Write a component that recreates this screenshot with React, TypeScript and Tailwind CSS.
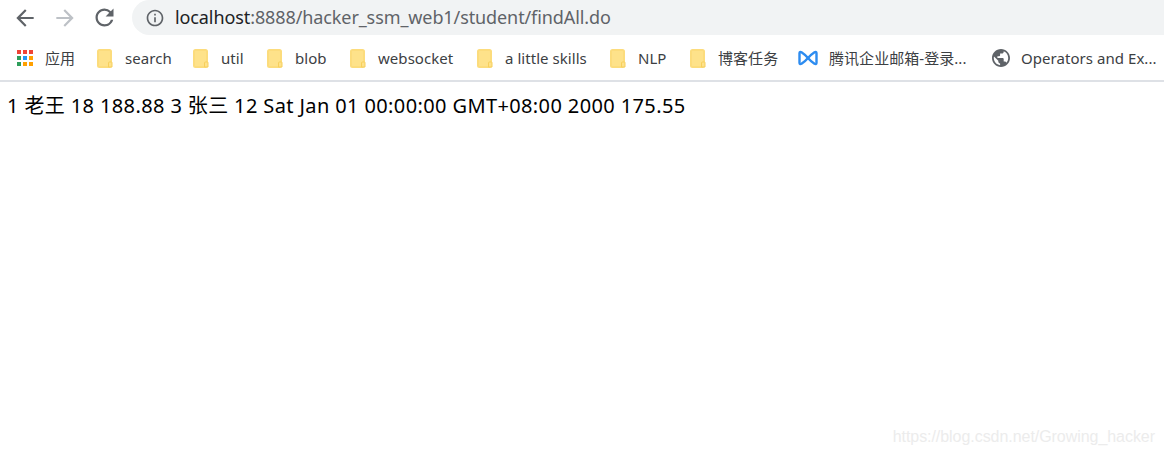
import React from 'react';

const FONT = "font-['Noto_Sans','Noto_Sans_CJK_SC',sans-serif]";

const NavIcon = ({ d, size, className }: { d: string; size: number; className: string }) => (
  <svg width={size} height={size} viewBox="0 0 24 24" fill="currentColor" className={`shrink-0 ${className}`}>
    <path d={d} />
  </svg>
);

const BACK = 'M20 11H7.83l5.59-5.59L12 4l-8 8 8 8 1.41-1.41L7.83 13H20v-2z';
const FORWARD = 'M4 11h12.17l-5.59-5.59L12 4l8 8-8 8-1.41-1.41L16.17 13H4v-2z';
const RELOAD =
  'M17.65 6.35A7.958 7.958 0 0 0 12 4c-4.42 0-7.99 3.58-7.99 8s3.57 8 7.99 8c3.73 0 6.84-2.55 7.73-6h-2.08A5.99 5.99 0 0 1 12 18c-3.31 0-6-2.69-6-6s2.69-6 6-6c1.66 0 3.14.69 4.22 1.78L13 11h7V4l-2.35 2.35z';
const INFO =
  'M11 7h2v2h-2zm0 4h2v6h-2zm1-9C6.48 2 2 6.48 2 12s4.48 10 10 10 10-4.48 10-10S17.52 2 12 2zm0 18c-4.41 0-8-3.59-8-8s3.59-8 8-8 8 3.59 8 8-3.59 8-8 8z';

const FolderIcon = () => (
  <svg width="16" height="19" viewBox="0 0 16 19" className="shrink-0">
    <rect x="1" y="1" width="13" height="17" rx="1.5" fill="#fee28a" stroke="#fcdc7c" strokeWidth="2" />
    <path d="M12.5 13h2a1 1 0 0 1 .5 1v4h-3.5v-4a1 1 0 0 1 1-1z" fill="#fee28a" stroke="#f7cf5c" />
  </svg>
);

const AppsIcon = () => {
  const colors = ['#ef4336', '#ef4336', '#ef4336', '#2e9e5b', '#2196f3', '#ffa000', '#2e9e5b', '#ffa000', '#ffa000'];
  return (
    <div className="grid grid-cols-3 gap-[2px] w-[16px] shrink-0">
      {colors.map((c, i) => (
        <div key={i} className="w-[4px] h-[4px]" style={{ backgroundColor: c }} />
      ))}
    </div>
  );
};

const MailIcon = () => (
  <svg width="20" height="16" viewBox="0 0 20 16" fill="none" stroke="#2d8cf0" strokeWidth="2.4" strokeLinejoin="round" className="shrink-0">
    <path d="M1.5 3.2 Q1.5 1.2 3.5 2.2 Q7 4.5 10 8 Q7 11.5 3.5 13.8 Q1.5 14.8 1.5 12.8 Z" />
    <path d="M18.5 3.2 Q18.5 1.2 16.5 2.2 Q13 4.5 10 8 Q13 11.5 16.5 13.8 Q18.5 14.8 18.5 12.8 Z" />
  </svg>
);

const GlobeIcon = () => (
  <svg width="18" height="18" viewBox="2 2 20 20" fill="#5f6368" className="shrink-0">
    <path d="M12 2C6.48 2 2 6.48 2 12s4.48 10 10 10 10-4.48 10-10S17.52 2 12 2zm-1 17.93c-3.95-.49-7-3.85-7-7.93 0-.62.08-1.21.21-1.79L9 15v1c0 1.1.9 2 2 2v1.93zm6.9-2.54c-.26-.81-1-1.39-1.9-1.39h-1v-3c0-.55-.45-1-1-1H8v-2h2c.55 0 1-.45 1-1V7h2c1.1 0 2-.9 2-2v-.41c2.93 1.19 5 4.06 5 7.41 0 2.08-.8 3.97-2.1 5.39z" />
  </svg>
);

const Bookmark = ({
  icon,
  label,
  width,
  gap = 'gap-[12px]',
}: {
  icon: React.ReactNode;
  label: string;
  width: string;
  gap?: string;
}) => (
  <div className={`flex items-center ${gap} text-[15px] tracking-[0.05px] text-[#3c4043] whitespace-nowrap`}>
    {icon}
    <span className={width}>{label}</span>
  </div>
);

export default function App() {
  const folders = [
    { name: 'search', width: 'w-[46px]' },
    { name: 'util', width: 'w-[24px]' },
    { name: 'blob', width: 'w-[33px]' },
    { name: 'websocket', width: 'w-[77px]' },
    { name: 'a little skills', width: 'w-[83px]' },
    { name: 'NLP', width: 'w-[30px]' },
    { name: '博客任务', width: 'w-[58px]' },
  ];

  return (
    <div className={`relative w-[1164px] h-[454px] bg-white overflow-hidden ${FONT}`}>
      <div className="flex items-center h-[35px]">
        <div className="flex items-center pl-[12px] gap-[14px] w-[132px]">
          <NavIcon d={BACK} size={26} className="text-[#5f6368]" />
          <NavIcon d={FORWARD} size={26} className="text-[#bdc1c6]" />
          <NavIcon d={RELOAD} size={27} className="text-[#5f6368] -ml-[1px]" />
        </div>
        <div className="flex-1 h-[35px] bg-[#f1f3f4] rounded-l-[18px] flex items-center pl-[13px] gap-[10px]">
          <NavIcon d={INFO} size={20} className="text-[#5f6368]" />
          <div className="text-[18px] tracking-[-0.1px] text-[#5f6368]">
            <span className="text-[#202124]">localhost</span>:8888/hacker_ssm_web1/student/findAll.do
          </div>
        </div>
      </div>

      <div className="flex items-center h-[44px] pl-[17px] pt-[1px] gap-[22px] border-b-2 border-[#dee1e6] box-content">
        <Bookmark icon={<AppsIcon />} label="应用" width="w-[30px]" />
        {folders.map((f) => (
          <Bookmark key={f.name} icon={<FolderIcon />} label={f.name} width={f.width} />
        ))}
        <Bookmark icon={<MailIcon />} label="腾讯企业邮箱-登录..." width="w-[141px]" gap="gap-[11px]" />
        <Bookmark icon={<GlobeIcon />} label="Operators and Ex..." width="w-[136px]" gap="gap-[11px]" />
      </div>

      <p className="pl-[7px] pt-[11px] text-[20px] tracking-[0.38px] leading-[26px] text-black whitespace-nowrap">
        1 老王 18 188.88 3 张三 12 Sat Jan 01 00:00:00 GMT+08:00 2000 175.55
      </p>

      <div className="absolute right-[9px] top-[425px] text-[16px] tracking-[-0.05px] text-[#ececec] font-['Liberation_Sans',sans-serif]">
        https://blog.csdn.net/Growing_hacker
      </div>
    </div>
  );
}
